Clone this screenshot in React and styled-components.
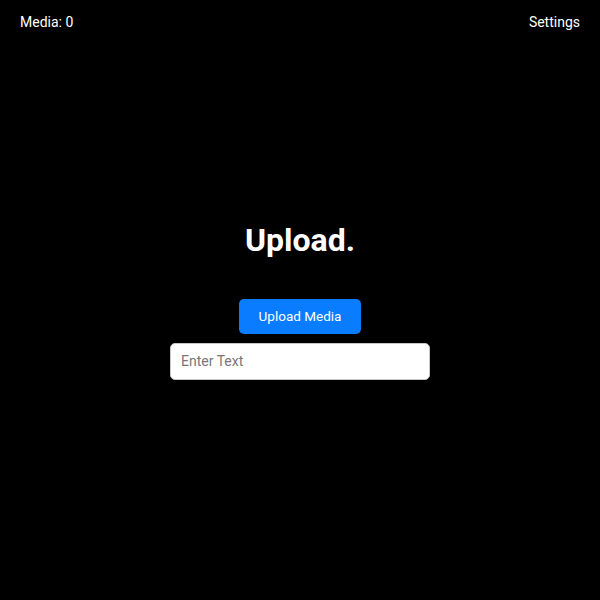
import React, { useState } from 'react';
import styled, { createGlobalStyle } from 'styled-components';

const GlobalStyle = createGlobalStyle`
  html, body {
    margin: 0;
    padding: 0;
    background: #000;
  }
  body {
    font-family: Roboto, "Liberation Sans", sans-serif;
    color: #fff;
  }
`

const Page = styled.div`
  height: 100vh;
  display: grid;
  grid-template-rows: 44px 1fr 44px;
  background: #000;
`

const TopBar = styled.header`
  display: flex;
  justify-content: space-between;
  align-items: center;
  padding: 0 20px;
  font-size: 14px;
`

const BarItem = styled.span`
  color: #fff;
  cursor: ${props => (props.clickable ? 'pointer' : 'default')};
`

const Main = styled.main`
  display: flex;
  flex-direction: column;
  align-items: center;
  justify-content: center;
`

const Title = styled.h1`
  margin: 0 0 40px;
  font-size: 32px;
  font-weight: 700;
  line-height: 38px;
  color: #fff;
`

const UploadButton = styled.button`
  height: 35px;
  width: 122px;
  border: none;
  border-radius: 5px;
  background: #0a7cff;
  color: #fff;
  font-family: Roboto, "Liberation Sans", sans-serif;
  font-size: 13.5px;
  cursor: pointer;
`

const TextInput = styled.input`
  box-sizing: border-box;
  margin-top: 9px;
  width: 260px;
  height: 37px;
  padding: 0 10px;
  border: 1px solid #c8c8c8;
  border-radius: 5px;
  background: #fff;
  font-family: Roboto, "Liberation Sans", sans-serif;
  font-size: 14px;
  color: #222;
  outline: none;

  &::placeholder {
    color: #777;
  }
`

export default function App() {
  const [count] = useState(0);
  const [text, setText] = useState('');

  return (
    <>
      <GlobalStyle />
      <Page>
        <TopBar>
          <BarItem>Media: {count}</BarItem>
          <BarItem clickable>Settings</BarItem>
        </TopBar>
        <Main>
          <Title>Upload.</Title>
          <UploadButton>Upload Media</UploadButton>
          <TextInput
            placeholder="Enter Text"
            value={text}
            onChange={e => setText(e.target.value)}
          />
        </Main>
        <div />
      </Page>
    </>
  );
}
